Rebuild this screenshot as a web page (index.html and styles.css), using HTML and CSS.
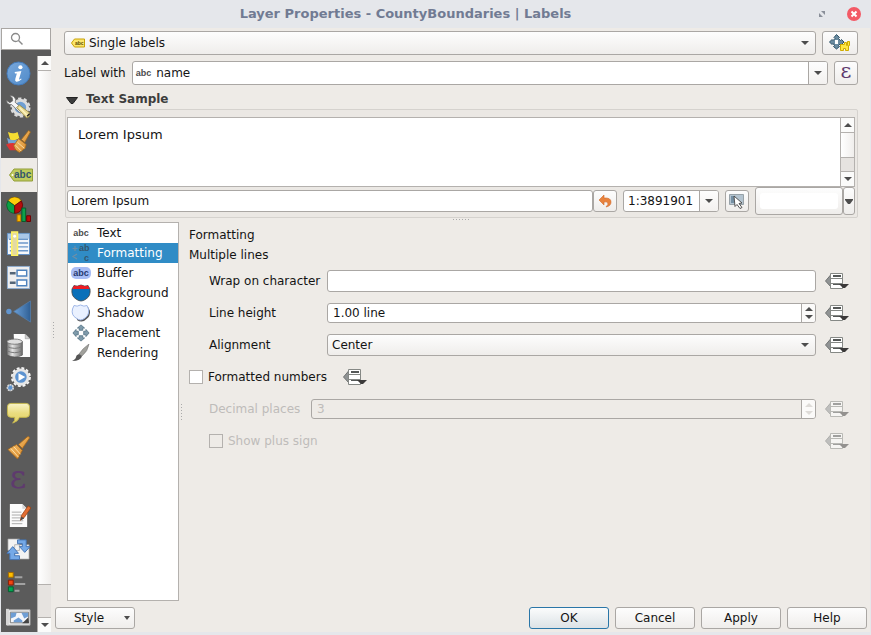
FILE: index.html
```html
<!DOCTYPE html>
<html lang="en">
<head>
<meta charset="utf-8">
<title>Layer Properties - CountyBoundaries | Labels</title>
<link rel="stylesheet" href="styles.css">
</head>
<body>
<svg class="defs" aria-hidden="true">
  <defs>
    <linearGradient id="blue" x1="0" y1="0" x2="1" y2="1"><stop offset="0" stop-color="#7aa9dc"/><stop offset="1" stop-color="#4f8ac9"/></linearGradient>
    <linearGradient id="wood" x1="0" y1="0" x2="1" y2="1"><stop offset="0" stop-color="#f3bd6a"/><stop offset="1" stop-color="#d98a2b"/></linearGradient>
    <linearGradient id="drum" x1="0" y1="0" x2="1" y2="0"><stop offset="0" stop-color="#777"/><stop offset=".35" stop-color="#e4e4e4"/><stop offset="1" stop-color="#6d6d6d"/></linearGradient>
    <linearGradient id="note" x1="0" y1="0" x2="0" y2="1"><stop offset="0" stop-color="#f8f3c8"/><stop offset=".5" stop-color="#e9dc7e"/><stop offset="1" stop-color="#e3d266"/></linearGradient>
    <linearGradient id="arrow" x1="0" y1="0" x2="1" y2="0"><stop offset="0" stop-color="#6ba0d8"/><stop offset="1" stop-color="#2f5f94"/></linearGradient>
    <symbol id="override" viewBox="0 0 24 18">
      <path d="M6 2.500L.5 9 6 15z" fill="#909394" stroke="#6f7271"/>
      <path d="M5.500 1.500h12v15h-12z" fill="#fff" stroke="#858885"/>
      <path d="M5.500 6.500h12M5.500 11.500h12" stroke="#858885"/>
      <path d="M8 4h8" stroke="#555857" stroke-width="2"/>
      <path d="M8 12.500h10" stroke="#555857"/>
      <path d="M14 12h10l-4 4h-2z" fill="#3b3939"/>
    </symbol>
    <symbol id="moves" viewBox="0 0 20 20">
      <path d="M10 1l4 3.500h-2V7H8V4.500H6zM10 19l4-3.500h-2V13H8v2.500H6zM1 10l3.500-4v2H7v4H4.500v2zM19 10l-3.500-4v2H13v4h2.500v2z" fill="#7f9bab" stroke="#48687c" stroke-width=".8"/>
    </symbol>
  </defs>
</svg>
<div class="window">
  <header class="titlebar">
    <h1>Layer Properties - CountyBoundaries | Labels</h1>
    <div class="window-buttons">
      <button aria-label="Maximize"><svg width="8" height="8" viewBox="0 0 8 8"><path d="M3 1h4v4zM1 3v4h4z" fill="#8a8f99"/></svg></button>
      <button aria-label="Close"><svg width="14" height="14" viewBox="0 0 14 14"><circle cx="7" cy="7" r="7" fill="#f35a66"/><path d="M4.500 4.500l5 5M9.500 4.500l-5 5" stroke="#fff" stroke-width="2"/></svg></button>
    </div>
  </header>
  <div class="body">
    <aside class="side">
      <div class="search">
        <input type="search" aria-label="Search">
        <svg width="14" height="14" viewBox="0 0 14 14"><circle cx="5.500" cy="5.500" r="4" fill="none" stroke="#8a8a8a" stroke-width="1.300"/><path d="M8.500 8.500l4 4" stroke="#8a8a8a" stroke-width="1.500"/></svg>
      </div>
      <div class="side-scroll">
        <nav class="pages">
          <button aria-label="Information"><svg viewBox="0 0 26 26"><circle cx="13" cy="13" r="12" fill="url(#blue)" stroke="#4379b7"/><circle cx="15" cy="6.500" r="2.200" fill="#fff"/><path d="M9 11.500l7-1-2.500 8.500q0 1 2.200-.8l.5.800q-3 3-5.500 2.500-1.800-.6-1-3l1.600-5.500h-2z" fill="#fff"/></svg></button>
          <button aria-label="Source"><svg viewBox="0 0 26 26"><circle cx="15" cy="13" r="7.500" fill="#6f9fd3" stroke="#dcdcdc" stroke-width="3"/><circle cx="15" cy="13" r="9.500" fill="none" stroke="#dcdcdc" stroke-width="2" stroke-dasharray="3.500 2.500"/><path d="M4 .5q5 0 6 4.500l-.5 2.500L18 15l-3 4-9-9Q1 10.500.5 5.500L4 8l3-2-.5-3z" fill="#f6f6f6" stroke="#666" stroke-width=".8"/><path d="M11 13l3-2.500 10.500 8q1.500 4-3 5.500z" fill="#e8d993" stroke="#8e813c" stroke-width=".8"/><path d="M14 13l8 8" stroke="#fff6c0" stroke-width="1.500"/><path d="M22 22l2.500-2.500" stroke="#222" stroke-width="1.500"/></svg></button>
          <button aria-label="Symbology"><svg viewBox="0 0 26 26"><path d="M2 3q6 3 10 0l2 7-9 3z" fill="#f5dd31"/><path d="M1 9q5 4 12 2l-1 6H3z" fill="#77a2d2"/><path d="M0 16q6-2 10-1l3 7q-5 0-9 0z" fill="#dd3333"/><path d="M16 11l7.500-9.500 2 1.500-6 11z" fill="url(#wood)" stroke="#9c6519" stroke-width=".8"/><path d="M13 10l8 6-1 4-6 4.500q-5-2-6-7z" fill="url(#wood)" stroke="#9c6519" stroke-width=".8"/><path d="M10 17l6 6M12 14l7 6" stroke="#fbe0a8"/></svg></button>
          <button class="current" aria-label="Labels"><svg class="tag" viewBox="0 0 24 14"><path d="M.5 7L5 1h18.500v12H5z" fill="#bfcb5c" stroke="#929d38"/><circle cx="3.500" cy="7" r="1" fill="#fff"/><text x="5" y="10" class="tag-text">abc</text></svg></button>
          <button aria-label="Diagrams"><svg viewBox="0 0 26 26"><path d="M9 9L2 4A8 8 0 0 1 16 4z" fill="#fecd0a" stroke="#6b4a00" stroke-width=".7"/><path d="M9 9v8A8.500 8.500 0 0 1 2 4z" fill="#0aa045" stroke="#065224" stroke-width=".7"/><path d="M9 9v8A8.500 8.500 0 0 0 16 4z" fill="#b50d0d" stroke="#5d0000" stroke-width=".7"/><path d="M11.500 18.500h4v7h-4z" fill="#fbb500" stroke="#a56d00"/><path d="M16.500 11.500h4v14h-4z" fill="#0ea04b" stroke="#06592a"/><path d="M21.500 19.500h4v6h-4z" fill="#b80c0c" stroke="#6a0000"/></svg></button>
          <button aria-label="Fields"><svg viewBox="0 0 26 26"><path d="M1.500 2.500h23v22h-23z" fill="#f5f7fa" stroke="#5e8fc6"/><path d="M2 3h22v5H2z" fill="#a9c7e8"/><path d="M3 8.500h20M4 12.500h19M4 16.500h19M4 20.500h19" stroke="#6c98ca" stroke-width="1.500"/><path d="M6 1h6v24.500H6z" fill="#e3d9a5" stroke="#fff35e" stroke-width="1.500"/><circle cx="9" cy="5.500" r="1.500" fill="#fff"/></svg></button>
          <button aria-label="Attributes Form"><svg viewBox="0 0 26 26"><path d="M1.500 1.500h23v23h-23z" fill="#eeeeef" stroke="#8cacd0"/><path d="M4 8.500h6M4 18.500h6" stroke="#526477" stroke-width="2.500"/><path d="M11.500 5.500h10v6h-10zM11.500 15.500h10v6h-10z" fill="#fff" stroke="#4e83be" stroke-width="1.500"/></svg></button>
          <button aria-label="Joins"><svg viewBox="0 0 26 26"><path d="M8 13L25.500 2v22z" fill="url(#arrow)" stroke="#557eaa" stroke-width=".8"/><circle cx="3" cy="13" r="2.800" fill="#6295ce"/></svg></button>
          <button aria-label="Auxiliary Storage"><svg viewBox="0 0 26 26"><path d="M8 1h12l5 5v19H9z" fill="#fdfdfd"/><path d="M20 1v5h5z" fill="#cfcfcf" stroke="#888" stroke-width=".5"/><path d="M1 9v14q8 4 16 0V9z" fill="url(#drum)" stroke="#555" stroke-width=".8"/><ellipse cx="9" cy="9" rx="8" ry="2.700" fill="#dedede" stroke="#666" stroke-width=".8"/><path d="M1 14q8 4 16 0M1 18.500q8 4 16 0" fill="none" stroke="#777"/></svg></button>
          <button aria-label="Actions"><svg viewBox="0 0 26 26"><circle cx="15.500" cy="10.500" r="7.500" fill="#5d93d0" stroke="#e6e6e6" stroke-width="3"/><circle cx="15.500" cy="10.500" r="9.500" fill="none" stroke="#f5f5f5" stroke-width="1.800" stroke-dasharray="3 2"/><path d="M13 6.500l7 4-7 4z" fill="#fff"/><circle cx="4.500" cy="21.500" r="3" fill="#5d93d0" stroke="#d7d7d7" stroke-width="1.800" stroke-dasharray="2 .6"/></svg></button>
          <button aria-label="Display"><svg viewBox="0 0 26 26"><path d="M5 2.500h16q3.500 0 3.500 3.500v7q0 4-3.500 4h-7q-1 4-7 6 3-3 2-6H5q-3.500 0-3.500-4V6q0-3.500 3.500-3.500z" fill="url(#note)" stroke="#c7b84d"/></svg></button>
          <button aria-label="Rendering"><svg viewBox="0 0 26 26"><path d="M13 10l9-8q2-1 2.500 1L17 14z" fill="url(#wood)" stroke="#a36517" stroke-width=".8"/><path d="M2 15l9-5 6 6-5 9z" fill="url(#wood)" stroke="#a36517" stroke-width=".8"/><path d="M5 14l8 9M8 12l7 8" stroke="#ffe1a9"/></svg></button>
          <button aria-label="Variables"><span class="epsilon">ε</span></button>
          <button aria-label="Metadata"><svg viewBox="0 0 26 26"><path d="M4 1h13l5 5v19H4z" fill="#fcfcfc"/><path d="M17 1v5h5z" fill="#d4d4d4"/><path d="M6 9.500h10M6 12.500h10M6 15.500h9M6 18.500h12M6 21.500h11" stroke="#aaa"/><path d="M15 18l1-5 7-10 3 2-7 10z" fill="#e26d32" stroke="#974213" stroke-width=".8"/><path d="M15 18l1-4 3 2z" fill="#4a4a4a"/></svg></button>
          <button aria-label="Dependencies"><svg viewBox="0 0 26 26"><path d="M2 2h12v12H2zM9 8h15v15H9z" fill="#f3f3f3" stroke="#999" stroke-width=".7"/><path d="M12 3h9v7h4l-5.500 6L14 10h3V7h-5z" fill="#75a9e7" stroke="#4675b3"/><path d="M14 23.500H4V17H1l6-7 6 7H9v2.500h5z" fill="#75a9e7" stroke="#4675b3"/></svg></button>
          <button aria-label="Legend"><svg viewBox="0 0 26 26"><path d="M2.500 1.500h5v5h-5z" fill="#ffbf00" stroke="#a86c00"/><path d="M2.500 9.500h5v5h-5z" fill="#f04412" stroke="#8d1c00"/><path d="M2.500 16.500h5v5h-5z" fill="#00a651" stroke="#055c2f"/><path d="M9 6.500h8M9 13.500h11M9 20.500h5" stroke="#a2a2a2" stroke-width="2"/></svg></button>
          <button aria-label="QGIS Server"><svg viewBox="0 0 26 26"><path d="M1 5h24v16H1z" fill="#eee" stroke="#aaa"/><path d="M4.500 7.500h19v11h-19z" fill="#f4f6fa" stroke="#777"/><path d="M5 8h6l-1 4-5 2zM16 8h7v4l-4 2zM8 16l5-3 4 3v2H8z" fill="#6e9ed5"/><path d="M17 19l6-6 1 6z" fill="#444"/><path d="M0 4h3v17H0z" fill="#d6d6d6"/></svg></button>
        </nav>
        <div class="scrollbar" aria-hidden="true">
          <span class="step"><svg width="8" height="4" viewBox="0 0 8 4"><path d="M0 4l4-4 4 4z"/></svg></span>
          <span class="thumb"></span><span class="trough"></span>
          <span class="step"><svg width="8" height="4" viewBox="0 0 8 4"><path d="M0 0h8l-4 4z"/></svg></span>
        </div>
      </div>
    </aside>
    <div class="grip side-grip" aria-hidden="true"></div>
    <main class="main">
      <div class="row mode-row">
        <div class="combo grow with-icon">
          <svg class="lead" width="14" height="10" viewBox="0 0 14 10"><path d="M.5 5l3-4h10v8h-10z" fill="#fbe66d" stroke="#c9a206"/><text x="4" y="7" class="mini-tag">abc</text></svg>
          <select aria-label="Label mode"><option>Single labels</option></select>
          <svg class="caret" width="8" height="4" viewBox="0 0 8 4"><path d="M0 0h8l-4 4z"/></svg>
        </div>
        <button class="tool wide" aria-label="Automated placement settings"><svg width="22" height="18" viewBox="0 0 22 18"><path d="M7.500.5l3 3-1 1 2 2 1-1 2.500 2.500-3 3-1-1-1.500 1.500 1 1-3 2.500-3-2.500 1-1L4 9.500l-1 1L.5 8l2.500-2.500 1 1 2-2-1-1z" fill="#6a8ba0" stroke="#2f5268"/><path d="M6 6h3v4H6z" fill="#fff"/><path d="M11.500 10.500h4v-2h2v3h1v-4h2v4h-1v5h-3v-2h-2v2h-3z" fill="#ffe845" stroke="#d0ac00"/></svg></button>
      </div>
      <div class="row field-row">
        <label for="field">Label with</label>
        <div class="editcombo grow">
          <span class="abc" aria-hidden="true">abc</span>
          <input id="field" value="name">
          <button aria-label="Choose field"><svg width="8" height="4" viewBox="0 0 8 4"><path d="M0 0h8l-4 4z"/></svg></button>
        </div>
        <button class="tool" aria-label="Expression"><span class="epsilon small">ε</span></button>
      </div>
      <h2 class="section"><svg width="12" height="7" viewBox="0 0 12 7"><path d="M.5.500h11l-4.500 6H5z" fill="#3c3c3c" stroke="#222"/></svg>Text Sample</h2>
      <section class="sample">
        <div class="preview">
          <div class="preview-text">Lorem Ipsum</div>
          <div class="scrollbar" aria-hidden="true">
            <span class="step"><svg width="8" height="4" viewBox="0 0 8 4"><path d="M0 4l4-4 4 4z"/></svg></span>
            <span class="thumb"></span><span class="trough"></span>
            <span class="step"><svg width="8" height="4" viewBox="0 0 8 4"><path d="M0 0h8l-4 4z"/></svg></span>
          </div>
        </div>
        <div class="row sample-row">
          <input class="box grow" aria-label="Sample text" value="Lorem Ipsum">
          <button class="tool short" aria-label="Reset sample text"><svg width="14" height="14" viewBox="0 0 14 14"><path d="M1 6l5-5v3q7-.5 7 4 0 4-5 5 3-3 1.500-4.500Q8.500 7.500 6 8v3z" fill="#e8823c" stroke="#d0682a" stroke-width=".6"/></svg></button>
          <div class="editcombo scale">
            <input aria-label="Scale" value="1:3891901">
            <button aria-label="Choose scale"><svg width="8" height="4" viewBox="0 0 8 4"><path d="M0 0h8l-4 4z"/></svg></button>
          </div>
          <button class="tool short" aria-label="Use map scale"><svg width="16" height="16" viewBox="0 0 16 16"><path d="M.5 1.500h14v10H.500z" fill="#b4c4d0" stroke="#98a2a8"/><path d="M2 3h3v7H2z" fill="#7590a4"/><path d="M5 3l8 7-3 .5 3 4-2 1-3-4-2 2z" fill="#fff" stroke="#444" stroke-width=".9"/></svg></button>
          <div class="colour">
            <button class="swatch" aria-label="Background colour"><span></span></button>
            <button class="menu" aria-label="Colour menu"><svg width="8" height="5" viewBox="0 0 8 5"><path d="M0 0h8v1L5 5H3L0 1z"/></svg></button>
          </div>
        </div>
      </section>
      <div class="hgrip" aria-hidden="true"></div>
      <div class="settings">
        <nav class="list">
          <button><span class="abc">abc</span>Text</button>
          <button class="selected"><svg width="20" height="18" viewBox="0 0 20 18"><path d="M4 2v5M1.500 4.500h5M6 10l-4 2.500L6 15" fill="none" stroke="#6f8fa6" stroke-width="1.200"/><text x="8" y="7" class="glyph">ab</text><text x="13" y="17" class="glyph">c</text></svg>Formatting</button>
          <button><span class="abc halo">abc</span>Buffer</button>
          <button><svg width="20" height="18" viewBox="0 0 20 18"><path d="M3 1.500q3 1.500 7-.5 4 2 7 .5L19 5q1 7-4 10-2.500 2-5 2t-5-2Q0 12 1 5z" fill="#0a70b9" stroke="#444" stroke-width=".8"/><path d="M3 1.500q3 1.500 7-.5 4 2 7 .5L18.600 5H1.400z" fill="#ed1c24"/></svg>Background</button>
          <button><svg width="20" height="18" viewBox="0 0 20 18"><path d="M5 3q3 1 6 0 3 1 6 0l2 4q.5 5-3.500 8-2.500 2.500-5 2.500T6 16z" fill="#555"/><path d="M3 1.500q3 1.500 6.500-.5 3.500 2 6.500.5L17.500 5q1 6-3.500 9-2.500 2-4.500 2T5 14Q0 11 1.500 5z" fill="#eaf1ff" stroke="#9fb7e8"/></svg>Shadow</button>
          <button><svg width="20" height="18" viewBox="0 0 20 20"><use href="#moves"/></svg>Placement</button>
          <button><svg width="20" height="18" viewBox="0 0 20 18"><path d="M18 0q-1 7-7 12l-3-2Q12 4 18 0z" fill="#a1a19c" stroke="#777" stroke-width=".6"/><path d="M8 10l3 2q-1 5-10 5 4-2 4-4 0-2 3-3z" fill="#555"/></svg>Rendering</button>
        </nav>
        <div class="grip form-grip" aria-hidden="true"></div>
        <form class="form">
          <h3>Formatting</h3>
          <h3>Multiple lines</h3>
          <div class="line">
            <label class="name" for="wrap">Wrap on character</label>
            <input id="wrap" class="box grow">
            <button type="button" class="override" aria-label="Data defined wrap character"><svg width="24" height="18"><use href="#override"/></svg></button>
          </div>
          <div class="line">
            <label class="name" for="height">Line height</label>
            <div class="spin grow"><input id="height" value="1.00 line"><span class="spin-buttons"><svg width="8" height="12" viewBox="0 0 8 12"><path d="M0 4l4-4 4 4zM0 8h8l-4 4z"/></svg></span></div>
            <button type="button" class="override" aria-label="Data defined line height"><svg width="24" height="18"><use href="#override"/></svg></button>
          </div>
          <div class="line">
            <label class="name" for="align">Alignment</label>
            <div class="combo low grow">
              <select id="align"><option>Center</option></select>
              <svg class="caret" width="8" height="4" viewBox="0 0 8 4"><path d="M0 0h8l-4 4z"/></svg>
            </div>
            <button type="button" class="override" aria-label="Data defined alignment"><svg width="24" height="18"><use href="#override"/></svg></button>
          </div>
          <div class="line flush">
            <label class="check"><input type="checkbox">Formatted numbers</label>
            <button type="button" class="override beside" aria-label="Data defined number format"><svg width="24" height="18"><use href="#override"/></svg></button>
          </div>
          <div class="line off">
            <label class="name narrow" for="places">Decimal places</label>
            <div class="spin grow"><input id="places" value="3" disabled><span class="spin-buttons"><svg width="8" height="12" viewBox="0 0 8 12"><path d="M0 4l4-4 4 4zM0 8h8l-4 4z"/></svg></span></div>
            <button type="button" class="override" disabled aria-label="Data defined decimal places"><svg width="24" height="18"><use href="#override"/></svg></button>
          </div>
          <div class="line off">
            <label class="check grow"><input type="checkbox" disabled>Show plus sign</label>
            <button type="button" class="override" disabled aria-label="Data defined plus sign"><svg width="24" height="18"><use href="#override"/></svg></button>
          </div>
        </form>
      </div>
      <footer class="actions">
        <button class="style">Style<svg width="6" height="4" viewBox="0 0 6 4"><path d="M0 0h6L3 4z"/></svg></button>
        <button class="default">OK</button>
        <button>Cancel</button>
        <button>Apply</button>
        <button>Help</button>
      </footer>
    </main>
  </div>
</div>
</body>
</html>
```
FILE: styles.css
```css
* { box-sizing: border-box; }
body {
  margin: 0;
  background: #e5e7eb;
  color: #141414;
  font: 12px/16px "DejaVu Sans", sans-serif;
}
button, input, select { font: inherit; color: inherit; margin: 0; padding: 0; }
button { border: 0; background: none; }
input { min-width: 0; }
h1, h2, h3 { margin: 0; font-size: 12px; }
svg { display: block; flex: none; fill: #4d4d4d; }
.defs { position: absolute; width: 0; height: 0; }
.grow { flex: 1; min-width: 0; }

.window { display: flex; flex-direction: column; height: 100vh; padding: 0 1px 3px; }
.titlebar { display: flex; align-items: center; height: 28px; flex: none; }
.titlebar h1 { flex: 1; text-align: center; color: #717b93; font-size: 13px; padding-right: 8px; }
.window-buttons { display: flex; align-items: center; gap: 21px; padding-right: 9px; }
.body { display: flex; flex: 1; min-height: 0; background: #eeebe7; }

/* page switcher */
.side { display: flex; flex-direction: column; width: 50px; background: #5b5b5b; }
.search { position: relative; height: 22px; margin-bottom: 6px; flex: none; }
.search input { width: 100%; height: 22px; border: 1px solid #a9a6a3; background: #fff; display: block; }
.search svg { position: absolute; left: 9px; top: 4px; }
.side-scroll { display: flex; flex: 1; min-height: 0; }
.pages { display: flex; flex-direction: column; flex: 1; overflow: hidden; }
.pages button { display: flex; align-items: center; justify-content: center; height: 34px; flex: none; padding-right: 2px; }
.pages svg { width: 25px; height: 25px; }
.pages .current { background: #eeebe7; padding: 0 0 0 4px; }
.pages .tag { width: 24px; height: 14px; }
.tag-text { font: bold 10px "Liberation Sans", sans-serif; fill: #33566b; }
.mini-tag { font: bold 5px "Liberation Sans", sans-serif; fill: #5b4a00; }
.epsilon { font: 32px/24px "DejaVu Serif", serif; color: #5e3a6e; padding-bottom: 8px; }
.epsilon.small { font-size: 21px; line-height: 18px; padding-bottom: 4px; }

.scrollbar { display: flex; flex-direction: column; width: 14px; border-left: 1px solid #b4b1ae; background: #fff; }
.step { display: flex; align-items: center; justify-content: center; height: 14px; flex: none; background: #fbfbfa; }
.thumb { flex: 1; border: solid #b4b1ae; border-width: 1px 0; background: linear-gradient(90deg, #fff, #f0eeec); }
.trough { height: 33px; background: #e6e3e0; border-bottom: 1px solid #b4b1ae; }

.grip { align-self: center; width: 2px; height: 16px; background: repeating-linear-gradient(#aaa 0 1px, transparent 1px 3px) 1px 0 / 1px 100% no-repeat; }
.side-grip { margin: 0 1px; }
.form-grip { margin: 0 4px 0 1px; }
.hgrip { width: 17px; height: 1px; margin: 1px auto 2px; background: repeating-linear-gradient(90deg, #aaa 0 1px, transparent 1px 3px); }

.main { display: flex; flex-direction: column; flex: 1; min-width: 0; padding: 3px 3px 3px 0; }
.row { display: flex; align-items: center; }
.mode-row, .field-row { padding: 0 9px; }
.mode-row { gap: 6px; }
.field-row { gap: 6px; margin-top: 6px; }

.combo, .editcombo, .tool, .swatch, .menu, .actions button {
  border: 1px solid #aaa7a4;
  border-radius: 3px;
  background: linear-gradient(#fdfdfd, #efedeb);
}
.combo { position: relative; height: 24px; }
.combo.low { height: 22px; }
.combo select { appearance: none; width: 100%; height: 100%; border: 0; background: none; padding-left: 4px; display: block; }
.combo.with-icon select { padding-left: 24px; }
.combo .lead { position: absolute; left: 6px; top: 6px; }
.combo .caret { position: absolute; right: 6px; top: 50%; margin-top: -2px; }
.tool { display: flex; align-items: center; justify-content: center; width: 24px; height: 24px; flex: none; }
.tool.wide { width: 36px; }
.tool.short { height: 22px; }

.editcombo { display: flex; align-items: center; height: 24px; background: #fff; }
.editcombo input { flex: 1; border: 0; background: none; padding-left: 5px; }
.editcombo button { display: flex; align-items: center; justify-content: center; align-self: stretch; width: 19px; border-left: 1px solid #aaa7a4; background: linear-gradient(#fdfdfd, #f3f1ef); border-radius: 0 2px 2px 0; }
.abc { font: bold 9px/12px "Liberation Sans", sans-serif; color: #4c4c4c; padding-left: 3px; }

.section { display: flex; align-items: center; gap: 8px; height: 24px; padding: 3px 0 0 11px; color: #3d3d3d; }
.section svg { margin-top: 3px; }
.sample { margin: 0 9px 0 10px; padding: 7px 2px 2px 1px; border: 1px solid #d5d2ce; border-radius: 2px; background: #ebe8e4; }
.preview { display: flex; height: 70px; border: 1px solid #b4b1ae; background: #fff; }
.preview-text { flex: 1; padding: 9px 10px; font-size: 13px; }
.preview .trough { height: 14px; }
.sample-row { height: 28px; }
.box { height: 22px; border: 1px solid #aaa7a4; border-radius: 3px; background: #fff; padding: 0 4px; }
.sample-row .box { padding: 0 3px; }
.scale { width: 96px; height: 22px; margin: 0 6px; }
.scale input { padding-left: 4px; }
.colour { display: flex; margin-left: 6px; }
.swatch { width: 88px; height: 28px; padding: 4px; }
.swatch span { display: block; height: 16px; border-radius: 3px; background: #fff; }
.menu { display: flex; align-items: center; justify-content: center; width: 12px; height: 28px; }

/* label settings */
.settings { display: flex; flex: 1; min-height: 0; padding: 0 18px 0 12px; }
.list { width: 112px; border: 1px solid #b4b1ae; background: #fff; }
.list button { display: flex; align-items: center; gap: 6px; width: 100%; height: 20px; padding-left: 3px; text-align: left; }
.list svg, .list .abc { width: 20px; padding: 0; text-align: center; }
.list .selected { background: #308cc6; color: #fff; }
.list .halo { border-radius: 5px; background: #a8bdf5; color: #26396f; }
.glyph { font: bold 9px "Liberation Sans", sans-serif; fill: #35576f; }
.form { flex: 1; min-width: 0; padding: 3px 0 0 3px; }
.form h3 { font-weight: normal; line-height: 20px; }
.line { display: flex; align-items: center; height: 32px; padding-left: 20px; }
.line.flush { padding-left: 0; }
.name { width: 118px; flex: none; white-space: nowrap; }
.name.narrow { width: 102px; }
.override { width: 24px; height: 18px; margin: 0 0 0 9px; flex: none; }
.override.beside { margin-left: 16px; }
.override:disabled { opacity: .5; }
.spin { display: flex; height: 20px; border: 1px solid #aaa7a4; border-radius: 3px; background: #fff; }
.spin input { flex: 1; border: 0; background: none; padding: 0 5px; }
.spin-buttons { display: flex; align-items: center; justify-content: center; width: 14px; border-left: 1px solid #aaa7a4; background: #fbfaf9; border-radius: 0 2px 2px 0; }
.check { display: flex; align-items: center; gap: 5px; }
.check input { appearance: none; width: 14px; height: 14px; border: 1px solid #b4b1ae; background: #fff; flex: none; }
.off { color: #bebcba; }
.off input { background: transparent; }
.off .spin { background: #eeebe7; }
.off .spin-buttons svg { fill: #dedbd8; }

.actions { display: flex; gap: 6px; padding-top: 6px; }
.actions button { display: flex; align-items: center; justify-content: center; width: 80px; height: 22px; }
.actions .style { margin-right: auto; justify-content: space-between; padding: 0 4px 0 18px; }
.actions .default { border-color: #2a76a8; background: linear-gradient(#fbfcfc, #dce2e6); }
```
